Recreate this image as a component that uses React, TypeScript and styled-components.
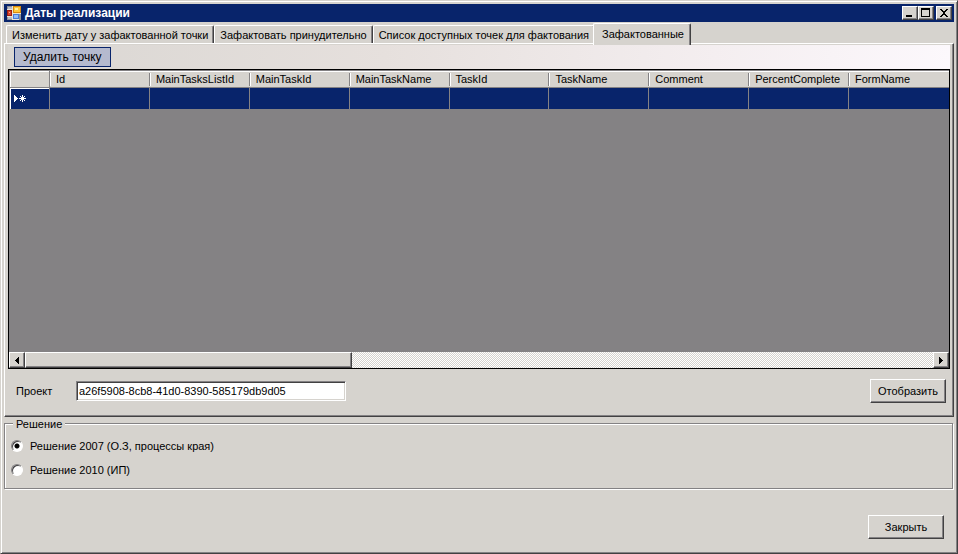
import React, { useState } from "react";
import styled, { createGlobalStyle, css } from "styled-components";

const face = "#d6d3ce";
const shade = "#848284";
const dark = "#424142";
const navy = "#08246b";

const GlobalStyle = createGlobalStyle`
  * { box-sizing: border-box; }
  body {
    margin: 0;
    background: ${face};
    color: #000;
    font: 11px/14px "Liberation Sans", Arial, sans-serif;
  }
  button, input { font: inherit; color: inherit; margin: 0; border-radius: 0; }
`;

const raised = css`
  border: 1px solid;
  border-color: #fff ${dark} ${dark} #fff;
  box-shadow: inset -1px -1px ${shade};
  background: ${face};
`;

const Frame = styled.div`
  display: flex;
  flex-direction: column;
  min-height: 100vh;
  padding: 3px;
  border: 1px solid;
  border-color: ${face} ${dark} ${dark} ${face};
  box-shadow: inset 1px 1px #fff, inset -1px -1px ${shade};
`;

const TitleBar = styled.header`
  display: flex;
  align-items: center;
  gap: 4px;
  height: 18px;
  padding: 0 2px 0 3px;
  background: ${navy};
  color: #fff;
`;

const Title = styled.h1`
  flex: 1;
  margin: 0;
  font: bold 12px/16px "Liberation Sans", Arial, sans-serif;
`;

const WindowButtons = styled.div`
  display: flex;
  color: #000;
`;

const CaptionButton = styled.button<{ $spaced?: boolean }>`
  ${raised}
  display: flex;
  width: 16px;
  height: 14px;
  padding: 0;
  margin-left: ${(p) => (p.$spaced ? "2px" : "0")};
`;

const TabStrip = styled.div`
  display: flex;
  align-items: flex-end;
  height: 21px;
  padding-left: 2px;
`;

const Tab = styled.button<{ $active: boolean }>`
  height: ${(p) => (p.$active ? "22px" : "18px")};
  margin-bottom: ${(p) => (p.$active ? "-2px" : "0")};
  margin-left: ${(p) => (p.$active ? "-2px" : "0")};
  padding: ${(p) => (p.$active ? "0 6px 2px 8px" : "1px 5px 0 5px")};
  border: 1px solid;
  border-color: #fff ${dark} transparent #fff;
  border-bottom: 0;
  border-radius: 2px 2px 0 0;
  box-shadow: inset -1px 0 ${shade};
  background: ${face};
  white-space: nowrap;
  z-index: ${(p) => (p.$active ? 1 : 0)};
`;

const TabPage = styled.main`
  display: flex;
  flex: 1;
  flex-direction: column;
  padding: 1px 3px 1px 3px;
  border: 1px solid;
  border-color: #fff ${dark} ${dark} #fff;
  box-shadow: inset -1px -1px ${shade};
`;

const Toolbar = styled.div`
  display: flex;
  align-items: center;
  height: 24px;
  padding-left: 6px;
  background: linear-gradient(90deg, #d9d6d2, #e6e0dd 40%, #f4eef0 75%, #fcf8fc);
`;

const ToolButton = styled.button`
  height: 20px;
  padding: 0 8px;
  border: 1px solid ${navy};
  background: #b5bace;
  font-size: 12px;
`;

const GridBox = styled.div`
  display: flex;
  flex: 1;
  flex-direction: column;
  border: 1px solid #000;
  background: ${shade};
`;

const GridView = styled.div`
  flex: 1;
  overflow: hidden;
  padding: 1px 0 0 1px;
`;

const Table = styled.table`
  width: 100%;
  table-layout: fixed;
  border-collapse: separate;
  border-spacing: 0;
`;

const RowHeadCol = styled.col`
  width: 40px;
`;

const HeadCell = styled.th`
  height: 17px;
  padding: 1px 0 0 6px;
  border-bottom: 1px solid ${shade};
  background:
    linear-gradient(${shade}, ${shade}) right 0 top 2px / 1px 13px no-repeat,
    linear-gradient(#fff, #fff) left 0 top 2px / 1px 13px no-repeat,
    ${face};
  box-shadow: inset 0 1px #fff;
  font-weight: normal;
  line-height: 15px;
  text-align: left;
  &:last-child {
    background:
      linear-gradient(#fff, #fff) left 0 top 2px / 1px 13px no-repeat,
      ${face};
  }
`;

const CornerCell = styled.td`
  border-right: 1px solid ${shade};
  border-bottom: 1px solid ${shade};
  box-shadow: inset 1px 1px #fff;
  background: ${face};
  padding: 0;
`;

const RowHeadCell = styled.th`
  height: 21px;
  padding: 0 0 0 4px;
  border-right: 1px solid ${shade};
  box-shadow: inset 1px 1px #fff;
  background: ${navy};
  color: #fff;
  text-align: left;
  svg { display: block; }
`;

const Cell = styled.td`
  padding: 0;
  border-right: 1px solid ${shade};
  background: ${navy};
  &:last-child { border-right: 0; }
`;

const ScrollBar = styled.div`
  display: flex;
  height: 16px;
  background: repeating-conic-gradient(#fff 0 25%, ${face} 0 50%) 0 0 / 2px 2px;
`;

const ScrollButton = styled.button`
  ${raised}
  display: flex;
  flex: none;
  align-items: center;
  justify-content: center;
  width: 16px;
  padding: 0;
`;

const ScrollTrack = styled.div`
  flex: 1;
`;

const ScrollThumb = styled.div`
  ${raised}
  width: 36%;
  height: 16px;
`;

const FilterRow = styled.div`
  display: flex;
  align-items: center;
  height: 46px;
  padding: 0 4px 2px 8px;
`;

const FieldLabel = styled.label`
  width: 60px;
`;

const TextBox = styled.input`
  width: 270px;
  height: 20px;
  padding: 0 2px;
  border: 1px solid;
  border-color: ${shade} #fff #fff ${shade};
  box-shadow: inset 1px 1px ${dark}, inset -1px -1px ${face};
  background: #fff;
  outline: none;
`;

const PushButton = styled.button`
  ${raised}
  width: 76px;
  height: 24px;
  margin-left: auto;
  padding: 0;
`;

const Group = styled.fieldset`
  display: flex;
  flex-direction: column;
  gap: 10px;
  margin: 0 1px 0 0;
  padding: 9px 6px 11px;
  border: 1px solid ${shade};
  box-shadow: 1px 1px #fff, inset 1px 1px #fff;
`;

const Legend = styled.legend`
  margin-left: 2px;
  padding: 1px 3px 0;
  background: ${face};
  line-height: 12px;
`;

const Option = styled.label`
  display: flex;
  align-items: center;
  gap: 7px;
  height: 14px;
`;

const Radio = styled.input`
  appearance: none;
  width: 12px;
  height: 12px;
  border: 1px solid;
  border-color: ${shade} #fff #fff ${shade};
  border-radius: 50%;
  box-shadow: inset 1px 1px ${dark};
  background: #fff;
  &:checked {
    background: radial-gradient(circle, #000 2px, #fff 3px);
  }
`;

const Footer = styled.footer`
  display: flex;
  padding: 26px 10px 11px 0;
`;

const AppIcon = () => (
  <svg width="14" height="14" viewBox="0 0 14 14" shapeRendering="crispEdges" aria-hidden="true">
    <rect width="14" height="14" fill="#e8e4d8" />
    <path d="M0 0h5v3H0zM0 11h5v3H0zM12 8h2v6h-2z" fill="#8e9098" />
    <path d="M1 1h4v2H1zM1 11h4v2H1z" fill="#b9bcc4" />
    <rect x="6" y="0" width="8" height="7" fill="#d98a10" />
    <rect x="7" y="1" width="6" height="5" fill="#ffc83c" />
    <rect x="8" y="2" width="3" height="2" fill="#fff0a0" />
    <rect x="0" y="4" width="5" height="6" fill="#a01c10" />
    <rect x="1" y="5" width="3" height="4" fill="#d8442c" />
    <rect x="2" y="6" width="1" height="1" fill="#f8a890" />
    <rect x="6" y="8" width="6" height="5" fill="#4a7cd8" />
    <rect x="7" y="9" width="4" height="3" fill="#8cbcff" />
  </svg>
);

const Glyph = ({ d }: { d: string }) => (
  <svg width="14" height="12" viewBox="0 0 14 12" shapeRendering="crispEdges" aria-hidden="true">
    <path d={d} />
  </svg>
);

const Arrow = ({ d }: { d: string }) => (
  <svg width="4" height="7" viewBox="0 0 4 7" shapeRendering="crispEdges" aria-hidden="true">
    <path d={d} />
  </svg>
);

const NewRowMark = () => (
  <svg width="13" height="7" viewBox="0 0 13 7" shapeRendering="crispEdges" fill="#fff" aria-hidden="true">
    <path d="M0 0h1v1h1v1h1v1h1v1h-1v1h-1v1h-1v1h-1z" />
    <path d="M8 0h1v7h-1zM5 3h7v1H5zM6 1h1v1H6zM7 2h1v1H7zM10 1h1v1h-1zM9 2h1v1H9zM6 5h1v1H6zM7 4h1v1H7zM10 5h1v1h-1zM9 4h1v1H9z" />
  </svg>
);

const tabs = [
  "Изменить дату у зафактованной точки",
  "Зафактовать принудительно",
  "Список доступных точек для фактования",
  "Зафактованные",
];

const columns = [
  "Id",
  "MainTasksListId",
  "MainTaskId",
  "MainTaskName",
  "TaskId",
  "TaskName",
  "Comment",
  "PercentComplete",
  "FormName",
];

const solutions = ["Решение 2007 (О.З, процессы края)", "Решение 2010 (ИП)"];

export default function App() {
  const [tab, setTab] = useState(3);
  const [solution, setSolution] = useState(0);
  const [project, setProject] = useState("a26f5908-8cb8-41d0-8390-585179db9d05");

  return (
    <>
      <GlobalStyle />
      <Frame>
        <TitleBar>
          <AppIcon />
          <Title>Даты реализации</Title>
          <WindowButtons>
            <CaptionButton aria-label="Свернуть">
              <Glyph d="M3 8h6v2H3z" />
            </CaptionButton>
            <CaptionButton aria-label="Развернуть">
              <Glyph d="M2 1h9v9H2zM3 3v6h7V3z" />
            </CaptionButton>
            <CaptionButton aria-label="Закрыть окно" $spaced>
              <Glyph d="M3 2h2v1h1v1h2V3h1V2h2v1h-1v1H9v1H8v2h1v1h1v1h1v1H9V9H8V8H6v1H5v1H3V9h1V8h1V7h1V5H5V4H4V3H3z" />
            </CaptionButton>
          </WindowButtons>
        </TitleBar>

        <TabStrip role="tablist">
          {tabs.map((name, i) => (
            <Tab key={name} role="tab" aria-selected={tab === i} $active={tab === i} onClick={() => setTab(i)}>
              {name}
            </Tab>
          ))}
        </TabStrip>

        <TabPage>
          <Toolbar>
            <ToolButton>Удалить точку</ToolButton>
          </Toolbar>
          <GridBox>
            <GridView>
              <Table>
                <colgroup>
                  <RowHeadCol />
                  {columns.map((name) => (
                    <col key={name} />
                  ))}
                </colgroup>
                <thead>
                  <tr>
                    <CornerCell />
                    {columns.map((name) => (
                      <HeadCell key={name} scope="col">
                        {name}
                      </HeadCell>
                    ))}
                  </tr>
                </thead>
                <tbody>
                  <tr>
                    <RowHeadCell scope="row" aria-label="Новая строка">
                      <NewRowMark />
                    </RowHeadCell>
                    {columns.map((name) => (
                      <Cell key={name} />
                    ))}
                  </tr>
                </tbody>
              </Table>
            </GridView>
            <ScrollBar>
              <ScrollButton aria-label="Влево">
                <Arrow d="M3 0h1v7H3V6H2V5H1V4H0V3h1V2h1V1h1z" />
              </ScrollButton>
              <ScrollTrack>
                <ScrollThumb />
              </ScrollTrack>
              <ScrollButton aria-label="Вправо">
                <Arrow d="M0 0h1v1h1v1h1v1h1v1H3v1H2v1H1v1H0z" />
              </ScrollButton>
            </ScrollBar>
          </GridBox>
          <FilterRow>
            <FieldLabel htmlFor="project">Проект</FieldLabel>
            <TextBox id="project" value={project} onChange={(e) => setProject(e.target.value)} />
            <PushButton>Отобразить</PushButton>
          </FilterRow>
        </TabPage>

        <Group>
          <Legend>Решение</Legend>
          {solutions.map((name, i) => (
            <Option key={name}>
              <Radio type="radio" name="solution" checked={solution === i} onChange={() => setSolution(i)} />
              {name}
            </Option>
          ))}
        </Group>

        <Footer>
          <PushButton>Закрыть</PushButton>
        </Footer>
      </Frame>
    </>
  );
}
